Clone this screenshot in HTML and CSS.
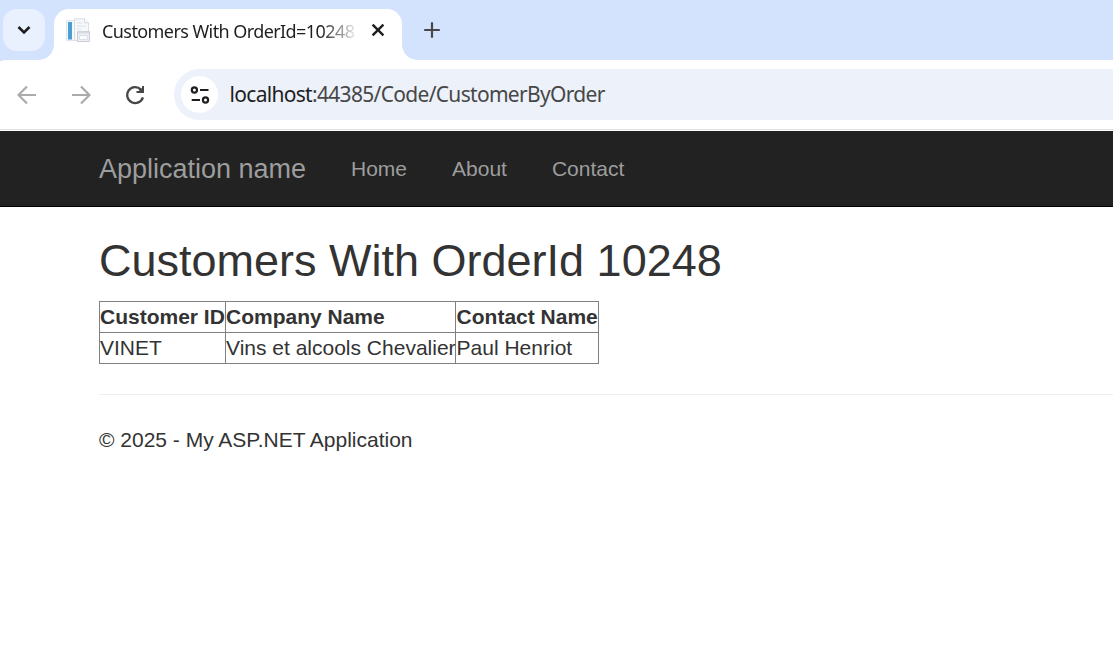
FILE: index.html
```html
<!DOCTYPE html>
<html lang="en">
<head>
<meta charset="utf-8">
<title>Customers With OrderId=10248</title>
<link rel="stylesheet" href="styles.css">
</head>
<body>
<div class="browser">
  <div class="tab-strip">
    <div class="tab-search"><svg width="42" height="42" viewBox="0 0 42 42"><path d="M15.500 18l5.500 5.500 5.500-5.500" fill="none" stroke="#1f1f1f" stroke-width="2.600"/></svg></div>
    <div class="tab">
      <svg class="favicon" width="26" height="26" viewBox="0 0 26 26">
        <path d="M.5 2.500h13v20H.5z" fill="#f5f7f9" stroke="#dfe5e9"/>
        <path d="M2 4h4v17.500H2z" fill="#4b9fd3"/>
        <path d="M8.500 .8h10l4 4v17.700h-14z" fill="#f7f8fa" stroke="#d9dfe4"/>
        <path d="M18.500 .8v4h4" fill="#fff" stroke="#d0d7dd"/>
        <path d="M11 5h5M11 8h9M11 11h4" stroke="#e5e9ee" stroke-width="1.500"/>
        <path d="M11.500 13.500h12v10h-12z" fill="#edf0f4" stroke="#c9ced8"/>
        <path d="M12 14.500h11" stroke="#d6dae2" stroke-width="2"/>
        <path d="M13.500 17.500h8v4h-8z" fill="#fafbfc" stroke="#dce0e5"/>
      </svg>
      <div class="tab-title"><span>Customers With OrderId=10248</span></div>
      <svg class="close" width="14" height="14" viewBox="0 0 14 14"><path d="M1.600 1.600l10.800 10.800M12.400 1.600L1.600 12.400" stroke="#1f1f1f" stroke-width="2.400"/></svg>
    </div>
    <svg class="new-tab" width="18" height="18" viewBox="0 0 18 18"><path d="M1.200 9h15.600M9 1.200v15.600" stroke="#474747" stroke-width="2.200"/></svg>
  </div>
  <div class="toolbar">
    <svg class="arrow" width="20" height="20" viewBox="0 0 20 20"><path d="M19 10H2M10 1.500L1.500 10l8.500 8.500" fill="none" stroke="#ababab" stroke-width="2.200"/></svg>
    <svg class="arrow" width="20" height="20" viewBox="0 0 20 20"><path d="M1 10h17M10 1.500l8.500 8.500-8.500 8.500" fill="none" stroke="#ababab" stroke-width="2.200"/></svg>
    <svg class="reload" width="20" height="20" viewBox="0 0 20 20"><path d="M17.900 12.300A8 8 0 1 1 16 4.500" fill="none" stroke="#474747" stroke-width="2.300"/><path d="M19 1v7h-7.500V6h3.200l-1.200-1.500L16 3l1 1V1z" fill="#474747"/></svg>
    <div class="address">
      <div class="site-info"><svg width="20" height="20" viewBox="0 0 20 20"><g fill="none" stroke="#1f1f1f" stroke-width="2.200"><circle cx="4.400" cy="5" r="2.600"/><path d="M10 5h8.500M1.700 15h8.300"/><circle cx="15.500" cy="15" r="2.600"/></g></svg></div>
      <div class="url"><span class="host">localhost</span>:44385/Code/CustomerByOrder</div>
    </div>
  </div>
</div>
<nav class="navbar">
  <a class="brand">Application name</a>
  <a class="link">Home</a>
  <a class="link">About</a>
  <a class="link">Contact</a>
</nav>
<main class="content">
  <h2>Customers With OrderId 10248</h2>
  <table>
    <colgroup><col class="col-id"><col class="col-company"><col class="col-contact"></colgroup>
    <tr><th>Customer ID</th><th>Company Name</th><th>Contact Name</th></tr>
    <tr><td>VINET</td><td>Vins et alcools Chevalier</td><td>Paul Henriot</td></tr>
  </table>
  <hr>
  <footer>© 2025 - My ASP.NET Application</footer>
</main>
</body>
</html>
```
FILE: styles.css
```css
* { box-sizing: border-box; }
body {
  margin: 0;
  height: 645px;
  overflow: hidden;
  background: #fff;
  color: #333;
  font: 21px/30px "Liberation Sans", Arial, sans-serif;
}
svg { display: block; flex: none; }
.browser {
  height: 131px;
  font-family: "Noto Sans", "Open Sans", sans-serif;
  background: linear-gradient(#d3e3fd 70px, #fff 70px);
}
.tab-strip {
  height: 60px;
  display: flex;
  align-items: flex-start;
  padding: 9px 0 0 3px;
}
.tab-search {
  width: 42px;
  height: 42px;
  border-radius: 14px;
  background: #e9f1fe;
}
.tab {
  position: relative;
  width: 348px;
  height: 51px;
  margin-left: 9px;
  padding: 0 17px 7px 12px;
  display: flex;
  align-items: center;
  background: #fff;
  border-radius: 15px 15px 0 0;
}
.tab::before, .tab::after {
  content: "";
  position: absolute;
  bottom: 0;
  width: 15px;
  height: 15px;
}
.tab::before {
  right: 100%;
  background: radial-gradient(circle at 0 0, transparent 14.500px, #fff 15px);
}
.tab::after {
  left: 100%;
  background: radial-gradient(circle at 100% 0, transparent 14.500px, #fff 15px);
}
.tab-title {
  width: 253px;
  margin-left: 9px;
  padding-left: 1px;
  overflow: hidden;
  white-space: nowrap;
  font-size: 18px;
  line-height: 28px;
  letter-spacing: -0.580px;
  color: #1f1f1f;
  -webkit-mask-image: linear-gradient(to right, #000 220px, transparent 258px);
  mask-image: linear-gradient(to right, #000 220px, transparent 258px);
}
.close { margin: 0 0 2px 17px; }
.new-tab { margin: 12px 0 0 21px; }
.toolbar {
  height: 70px;
  display: flex;
  align-items: center;
  padding-left: 17px;
  background: #fff;
  border-bottom: 1px solid #dfe1e3;
  border-top-left-radius: 8px 2px;
}
.arrow { margin-right: 34px; }
.reload { margin-right: 29px; }
.address {
  flex: 1;
  height: 51px;
  display: flex;
  align-items: center;
  padding-left: 7px;
  border-radius: 26px 0 0 26px;
  background: #ecf1fa;
}
.site-info {
  width: 37px;
  height: 37px;
  display: flex;
  align-items: center;
  justify-content: center;
  border-radius: 50%;
  background: #fff;
}
.url {
  margin-left: 11.500px;
  padding-bottom: 1px;
  font-size: 21px;
  letter-spacing: -0.690px;
  white-space: nowrap;
  color: #474747;
}
.host { color: #1f1f1f; }
.navbar {
  height: 76px;
  display: flex;
  align-items: center;
  padding-left: 99px;
  background: #222;
  border-bottom: 1px solid #000;
  color: #9d9d9d;
}
.brand { width: 252px; font-size: 27px; }
.link { margin-right: 45px; }
.content { padding: 29px 0 0 99px; }
h2 {
  margin: 0 0 15px;
  font-size: 45px;
  line-height: 50px;
  font-weight: 400;
}
table {
  width: 500px;
  table-layout: fixed;
  border-collapse: collapse;
}
.col-id { width: 126px; }
.col-company { width: 230px; }
.col-contact { width: 143px; }
th, td {
  height: 31px;
  padding: 0;
  border: 1px solid #808080;
  text-align: left;
  white-space: nowrap;
}
th:last-child, td:last-child { padding-left: 0.600px; }
hr {
  margin: 30px 0;
  border: 0;
  border-top: 1px solid #eee;
}
```
